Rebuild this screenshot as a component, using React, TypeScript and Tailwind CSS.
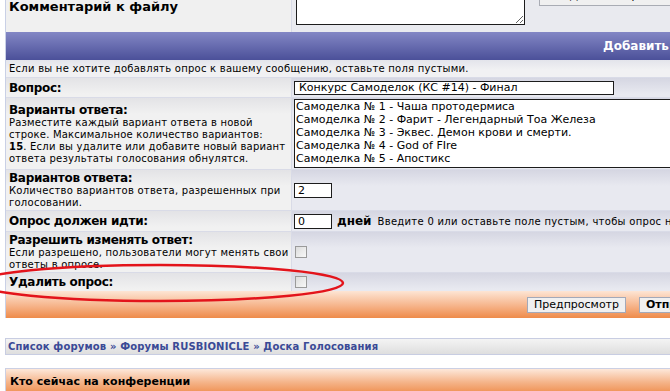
const rightBg = 'bg-[linear-gradient(#d5d6e2,#e8e9f0_16px)]'

function Row({ h, left, right }: { h: string; left: React.ReactNode; right: React.ReactNode }) {
  return (
    <div className={`flex border-t border-[#d9dbe7] ${h}`}>
      <div className="flex w-[286px] shrink-0 items-center border-r border-[#d9dbe7] bg-[linear-gradient(#e3e3e6,#f1f1f1_16px)] pl-[3px]">
        <div className="w-full">{left}</div>
      </div>
      <div className={`flex flex-1 items-center pl-[2px] ${rightBg}`}>{right}</div>
    </div>
  )
}

function Label({ children }: { children: React.ReactNode }) {
  return <div className="text-[12px] font-bold leading-[14px] tracking-[-0.3px]">{children}</div>
}

function Hint({ children }: { children: React.ReactNode }) {
  return <div className="text-[10px] leading-[12px] tracking-[0.25px]">{children}</div>
}

export default function App() {
  return (
    <div className="relative h-[391px] w-[670px] overflow-hidden bg-white font-['DejaVu_Sans',Verdana,sans-serif] text-black">
      {/* posting form */}
      <div className="-mt-[32px] ml-[5px] w-[820px] border-l border-[#c9d0e6]">
        <div className="flex h-[64px]">
          <div className="w-[286px] shrink-0 border-r border-[#d9dbe7] bg-[#f0f0f0] px-[3px] pt-[32px]">
            <div className="text-[13px] font-bold leading-[14px]">Комментарий к файлу</div>
          </div>
          <div className="flex flex-1 items-start bg-[#e9eaef] pl-[4px]">
            <textarea
              readOnly
              className="mt-[7px] h-[50px] w-[229px] border border-[#1c1c1c] bg-white"
            />
            <button className="ml-[14px] mt-[18px] h-[20px] w-[150px] border border-[#a9acb4] bg-[#f0f0f0] text-[11px] leading-[18px]">
              Добавить файл
            </button>
          </div>
        </div>

        <div className="flex h-[28px] items-center bg-[linear-gradient(#8387c5,#4b5099)] pl-[597px]">
          <span className="text-[12px] font-bold text-white">Добавить опрос</span>
        </div>

        <div className="flex h-[17px] items-center bg-[linear-gradient(#e3e4eb,#f1f1f3_10px)] px-[3px]">
          <Hint>Если вы не хотите добавлять опрос к вашему сообщению, оставьте поля пустыми.</Hint>
        </div>

        <Row
          h="h-[20px]"
          left={<Label>Вопрос:</Label>}
          right={
            <div className="h-[14px] w-[320px] border border-[#1c1c1c] bg-white pl-[4px] text-[11px] leading-[12px]">
              Конкурс Самоделок (КС #14) - Финал
            </div>
          }
        />

        <Row
          h="h-[72px]"
          left={
            <>
              <Label>Варианты ответа:</Label>
              <div className="text-[10px] leading-[12px] tracking-[0.2px]">
                Разместите каждый вариант ответа в новой строке. Максимальное количество
                вариантов:
                <br />
                <b>15</b>. Если вы удалите или добавите новый вариант ответа результаты
                голосования обнулятся.
              </div>
            </>
          }
          right={
            <div className="h-[69px] w-[430px] border border-[#1c1c1c] bg-white pl-[1px] text-[11px] leading-[13px]">
              <div>Самоделка № 1 - Чаша протодермиса</div>
              <div>Самоделка № 2 - Фарит - Легендарный Тоа Железа</div>
              <div>Самоделка № 3 - Эквес. Демон крови и смерти.</div>
              <div>Самоделка № 4 - God of FIre</div>
              <div>Самоделка № 5 - Апостикс</div>
            </div>
          }
        />

        <Row
          h="h-[41px]"
          left={
            <>
              <Label>Вариантов ответа:</Label>
              <Hint>Количество вариантов ответа, разрешенных при голосовании.</Hint>
            </>
          }
          right={
            <div className="h-[15px] w-[38px] border border-[#1c1c1c] bg-white pl-[3px] text-[11px] leading-[13px]">
              2
            </div>
          }
        />

        <Row
          h="h-[21px]"
          left={<Label>Опрос должен идти:</Label>}
          right={
            <div className="flex items-center">
              <div className="h-[15px] w-[38px] border border-[#1c1c1c] bg-white pl-[3px] text-[11px] leading-[13px]">
                0
              </div>
              <span className="ml-[5px] text-[12px] font-bold">дней</span>
              <span className="ml-[6px] whitespace-nowrap text-[10px] tracking-[0.3px]">
                Введите 0 или оставьте поле пустым, чтобы опрос никогда не заканчивался
              </span>
            </div>
          }
        />

        <Row
          h="h-[41px]"
          left={
            <>
              <Label>Разрешить изменять ответ:</Label>
              <Hint>Если разрешено, пользователи могут менять свои ответы в опросе.</Hint>
            </>
          }
          right={<div className="ml-[1px] h-[12px] w-[12px] border border-[#9a9a9a] bg-[linear-gradient(135deg,#dcdcdc,#f8f8f8)]" />}
        />

        <Row
          h="h-[19px]"
          left={<Label>Удалить опрос:</Label>}
          right={<div className="ml-[1px] h-[12px] w-[12px] border border-[#9a9a9a] bg-[linear-gradient(135deg,#dcdcdc,#f8f8f8)]" />}
        />

        <div className="flex h-[27px] items-center gap-[13px] bg-[linear-gradient(#fde5d4,#f6b48a_55%,#ee8b4a)] pl-[521px]">
          <button className="h-[16px] border border-[#a3a9b9] bg-[#f0f0f0] px-[6px] text-[11px] leading-[14px]">
            Предпросмотр
          </button>
          <button className="h-[16px] border border-[#a3a9b9] bg-[#f0f0f0] px-[6px] text-[11px] font-bold leading-[14px]">
            Отправить
          </button>
        </div>
      </div>

      {/* breadcrumbs */}
      <div className="ml-[5px] mt-[20px] flex h-[17px] w-[820px] items-center border border-[#c8cde2] bg-[linear-gradient(#f4f4f4,#dedede)] px-[2px]">
        <span className="text-[10px] font-bold tracking-[0.15px] text-[#3a4a96]">
          Список форумов » Форумы RUSBIONICLE » Доска Голосования
        </span>
      </div>

      {/* who is online */}
      <div className="ml-[5px] mt-[13px] flex h-[28px] w-[820px] items-center border border-[#cbd0e4] bg-[linear-gradient(#fde8da,#f5b58b_50%,#ee8a48)] px-[4px]">
        <span className="text-[11px] font-bold">Кто сейчас на конференции</span>
      </div>

      {/* red marker ellipse */}
      <svg className="pointer-events-none absolute left-0 top-0" width="670" height="391">
        <ellipse cx="160" cy="283" rx="183" ry="18" fill="none" stroke="#e3141b" strokeWidth="2.5" />
      </svg>
    </div>
  )
}
